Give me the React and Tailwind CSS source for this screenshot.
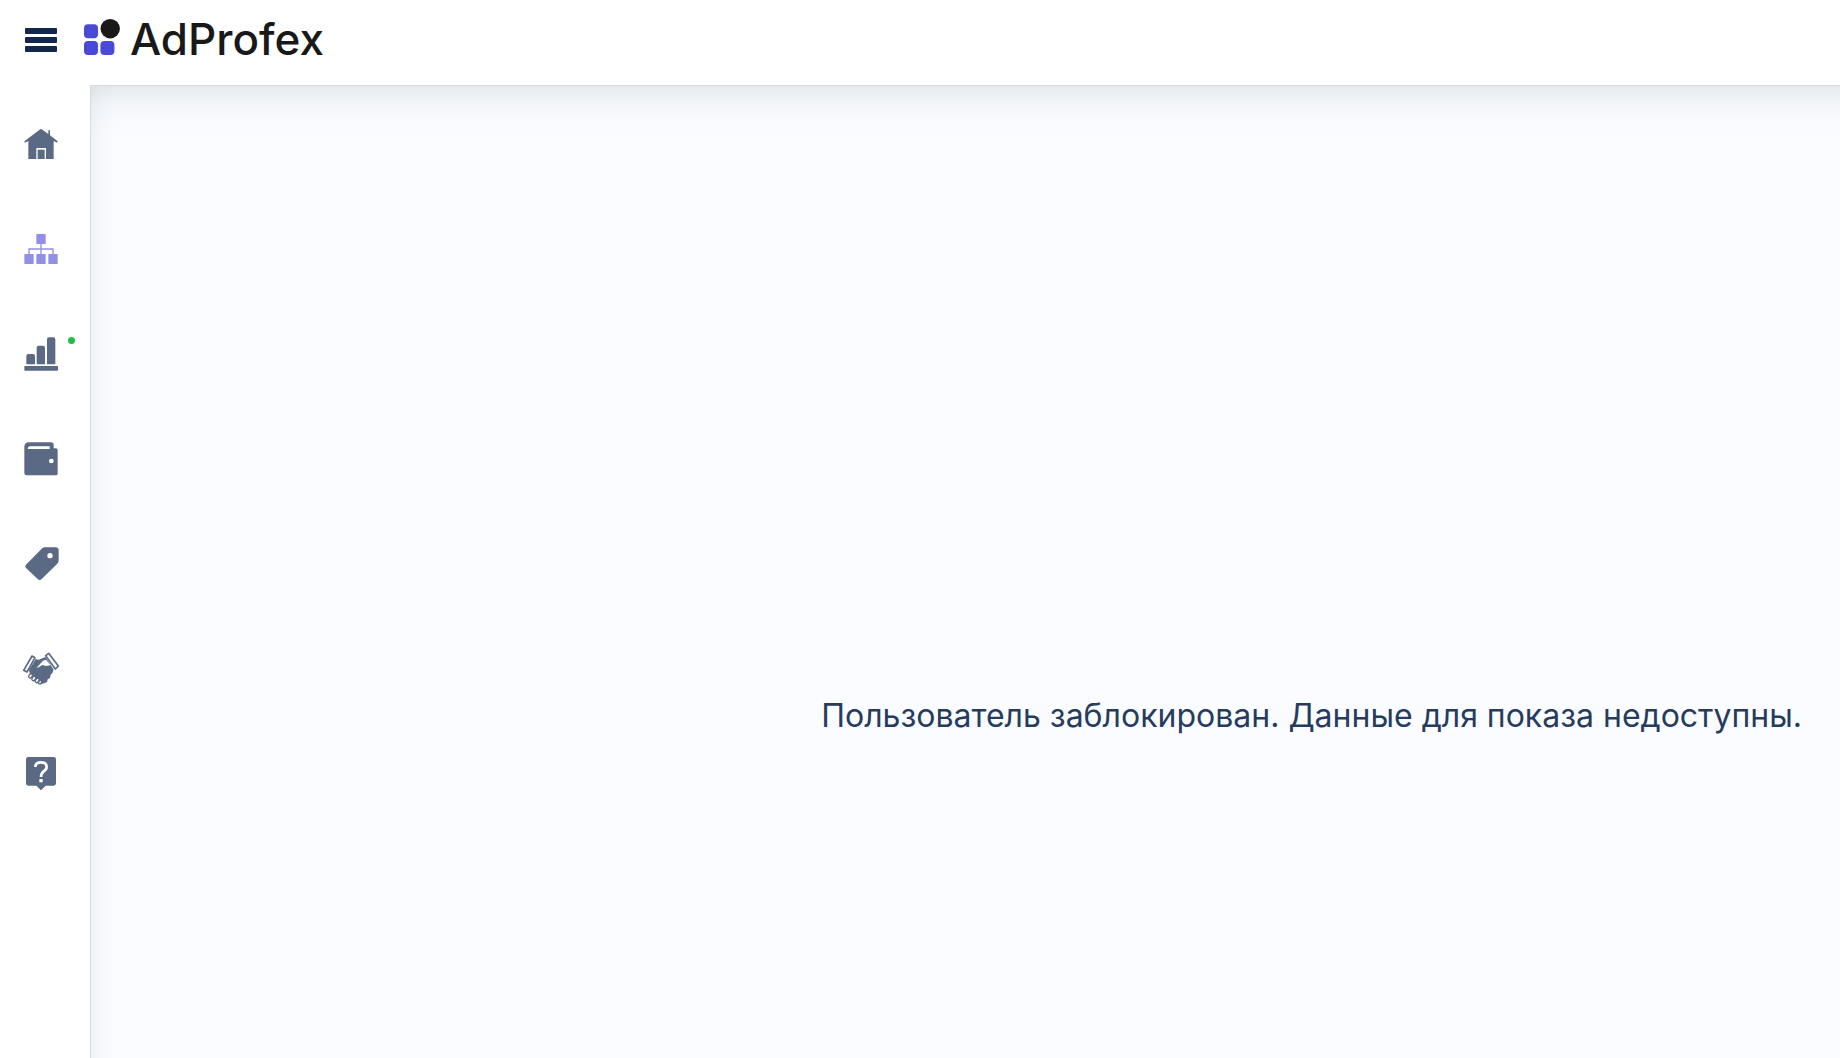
const menu = [
  { label: 'Главная', Icon: HomeIcon },
  { label: 'Кампании', Icon: SitemapIcon, active: true },
  { label: 'Статистика', Icon: ChartIcon, dot: true },
  { label: 'Финансы', Icon: WalletIcon },
  { label: 'Промокоды', Icon: TagIcon },
  { label: 'Партнёрам', Icon: HandshakeIcon },
  { label: 'Помощь', Icon: HelpIcon },
]

export default function App() {
  return (
    <div className="flex min-h-screen flex-col bg-white font-['Inter','Noto_Sans',sans-serif]">
      {/* Header */}
      <header className="flex h-[85px] items-start pl-[25px]">
        <button type="button" aria-label="Меню" className="mt-7 flex h-6 w-8 cursor-pointer flex-col justify-between">
          <span className="h-[6px] w-full rounded-[1px] bg-[#12284c]" />
          <span className="h-[6px] w-full rounded-[1px] bg-[#12284c]" />
          <span className="h-[6px] w-full rounded-[1px] bg-[#12284c]" />
        </button>
        <a href="#" className="mt-[19px] ml-[27px] flex items-start gap-[10px]">
          <svg viewBox="0 0 36 36" className="size-9 shrink-0" aria-hidden="true">
            <rect x="0" y="5.2" width="14" height="14" rx="4" fill="#4a4ad9" />
            <rect x="0" y="22" width="14" height="14" rx="4" fill="#4a4ad9" />
            <rect x="16.4" y="22" width="14" height="14" rx="4" fill="#4a4ad9" />
            <circle cx="26.2" cy="9.7" r="9.7" fill="#191919" />
          </svg>
          <span className="text-[44px] leading-10 font-medium text-[#191919]">AdProfex</span>
        </a>
      </header>

      <div className="flex flex-1">
        {/* Sidebar */}
        <nav className="w-[90px] shrink-0 pt-[6px]">
          <ul>
            {menu.map(({ label, Icon, active, dot }) => (
              <li key={label}>
                <a
                  href="#"
                  aria-label={label}
                  className={`relative flex h-[105px] items-center pl-[21px] ${active ? 'text-[#9190e6]' : 'text-[#5b6a84]'}`}
                >
                  <Icon />
                  {dot && <span className="absolute top-9 right-[15px] size-[7px] rounded-full bg-[#20bf46]" />}
                </a>
              </li>
            ))}
          </ul>
        </nav>

        {/* Content */}
        <main className="flex flex-1 items-center justify-end border-t border-l border-[#d6dadd] bg-[#fbfcff] bg-[linear-gradient(to_bottom,rgba(80,110,110,0.13),rgba(100,130,150,0.05)_18px,rgba(100,130,170,0.015)_36px,transparent_56px),linear-gradient(to_right,rgba(110,150,180,0.09),rgba(110,150,180,0.03)_12px,transparent_24px)] pt-72 pr-[38px]">
          <p className="text-[32px] leading-10 text-[#263c5e]">
            Пользователь заблокирован. Данные для показа недоступны.
          </p>
        </main>
      </div>
    </div>
  )
}

function Glyph({ children }) {
  return (
    <svg viewBox="33 27 120 120" className="size-10" fill="currentColor" aria-hidden="true">
      {children}
    </svg>
  )
}

function HomeIcon() {
  return (
    <Glyph>
      <path d="M93 41L115 57V46h5v15l23 18-2 4-10-5v54h-23v-33H79v33H55V78l-10 5-2-4z" />
      <path d="M83 104h21v28H83z" />
    </Glyph>
  )
}

function SitemapIcon() {
  return (
    <Glyph>
      <rect x="79" y="42" width="28" height="30" rx="2" />
      <rect x="43" y="102" width="28" height="30" rx="2" />
      <rect x="79" y="102" width="28" height="30" rx="2" />
      <rect x="115" y="102" width="28" height="30" rx="2" />
      <path d="M93 70v34M57 104V87h72v17" fill="none" stroke="currentColor" strokeWidth="4" />
    </Glyph>
  )
}

function ChartIcon() {
  return (
    <Glyph>
      <path d="M49 118V93q0-6 6-6h14q6 0 6 6v25zM80 118V68q0-6 6-6h13q6 0 6 6v50zM111 118V43q0-6 6-6h13q6 0 6 6v75z" />
      <rect x="43" y="123" width="101" height="14" rx="2" />
    </Glyph>
  )
}

function WalletIcon() {
  return (
    <Glyph>
      <path
        fillRule="evenodd"
        d="M57 37h66q8 0 8 8v10h7q5 0 5 5v71q0 5-5 5H50q-7 0-7-7V51q0-14 14-14zM59 49q-6 0-6 8h66v-8zM124 86a7 7 0 1 0 0 14a7 7 0 1 0 0-14z"
      />
    </Glyph>
  )
}

function TagIcon() {
  return (
    <Glyph>
      <path
        fillRule="evenodd"
        d="M104 37h33q9 0 9 9v31q0 5-4 9l-47 46q-6 6-12 0L48 99q-5-5 0-10l47-48q4-4 9-4zM120 54a8 8 0 1 0 0 16a8 8 0 1 0 0-16z"
      />
    </Glyph>
  )
}

function HandshakeIcon() {
  return (
    <Glyph>
      <path d="M77 57q8 4 16 0l14-5 24 37-4 10-5 5-2 10-7 4-2 8-8 4-9 2-8-7-27-25-2-10z" />
      {/* Cuffs */}
      <path
        d="M66 48l9 5-24 43-10-5zM107 47l9-7 29 38-9 9z"
        fill="#fff"
        stroke="currentColor"
        strokeWidth="5"
        strokeLinejoin="round"
      />
      {/* Palm edge */}
      <path d="M80 83l19-21 9-3 13 17-12 2-12-3-14 8z" fill="#fff" />
      <path d="M79 71q9-10 26-17" fill="none" stroke="currentColor" strokeWidth="5" />
      {/* Fingers */}
      <g fill="#fff" stroke="currentColor" strokeWidth="4">
        <rect x="57" y="101" width="9" height="13" rx="4" transform="rotate(32 61 108)" />
        <rect x="67" y="108" width="9" height="14" rx="4" transform="rotate(32 71 115)" />
        <rect x="77" y="114" width="9" height="14" rx="4" transform="rotate(32 81 121)" />
        <rect x="86" y="121" width="8" height="11" rx="4" transform="rotate(20 90 127)" />
      </g>
    </Glyph>
  )
}

function HelpIcon() {
  return (
    <Glyph>
      <path d="M55 36h76q7 0 7 7v72q0 7-7 7h-24l-14 14-14-14H55q-7 0-7-7V43q0-7 7-7z" />
      <path d="M76 66q0-14 17-14t17 14q0 7-9 13-8 6-8 17" fill="none" stroke="#fff" strokeWidth="8" />
      <rect x="88" y="102" width="10" height="10" fill="#fff" />
    </Glyph>
  )
}
